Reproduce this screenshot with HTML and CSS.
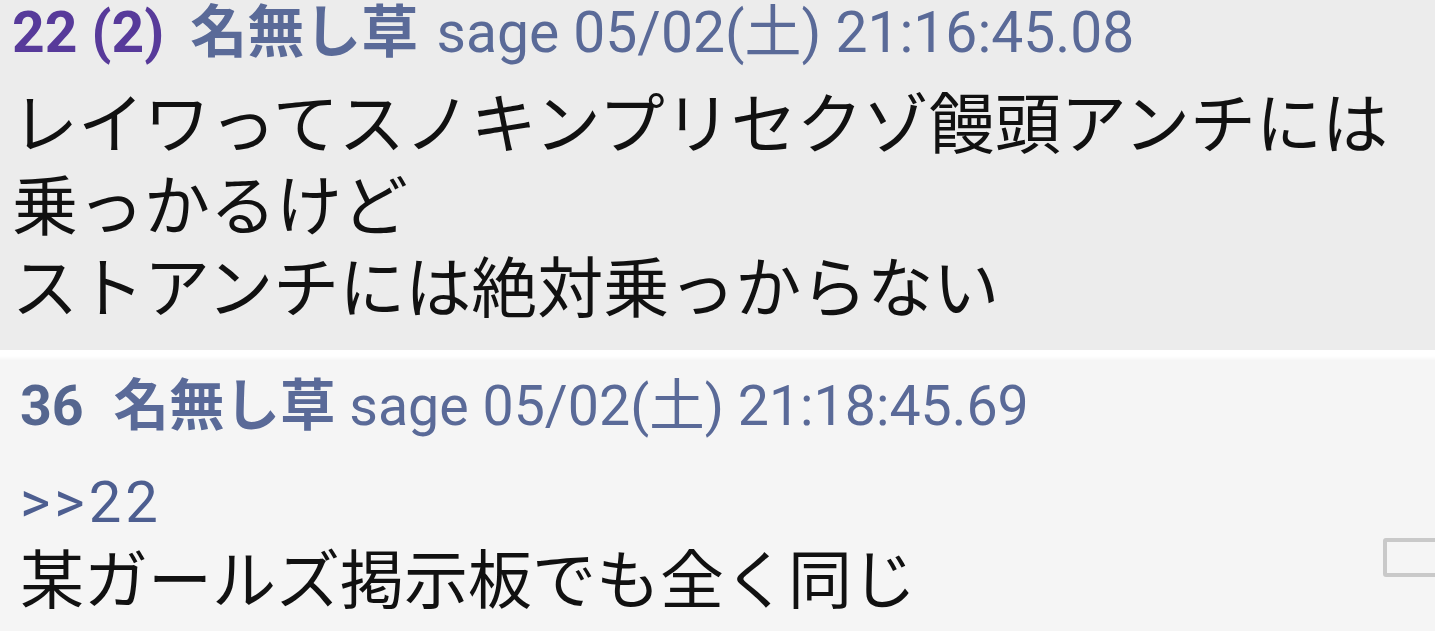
FILE: index.html
```html
<!DOCTYPE html>
<html>
  <head>
    <meta name="viewport" content="width=device-width, initial-scale=1" />
    <link rel="stylesheet" href="styles.css">
  </head>
  <body>
    <div class="thread">
      <div class="res res-read">
        <div class="res-head">
          <span class="num num-ref">22 (2)</span>
          <span class="name">名無し草</span>
          <span class="mail">sage</span>
          <span class="date">05/02(土) 21:16:45.08</span>
        </div>
        <div class="res-body">
          レイワってスノキンプリセクゾ饅頭アンチには<br />
          乗っかるけど<br />
          ストアンチには絶対乗っからない
        </div>
      </div>

      <div class="divider"></div>

      <div class="res res-new">
        <div class="res-head">
          <span class="num">36</span>
          <span class="name">名無し草</span>
          <span class="mail">sage</span>
          <span class="date">05/02(土) 21:18:45.69</span>
        </div>
        <a class="anchor">&gt;&gt;22</a>
        <div class="res-body">某ガールズ掲示板でも全く同じ</div>
        <span class="check"></span>
      </div>
    </div>
  </body>
</html>
```

FILE: styles.css
```css
* {
  box-sizing: border-box;
}
body {
  margin: 0;
  background: #f5f5f5;
  font-family: Roboto, "Noto Sans CJK JP", sans-serif;
  overflow: hidden;
}

/* One post */
.res {
  position: relative;
}
.res-read {
  background: #ececec;
  padding: 0 12px 26px 12px;
}
.res-new {
  background: #f5f5f5;
  padding: 9px 20px 0 20px;
  height: 273px;
}

/* white gap between posts */
.divider {
  height: 10px;
  background: linear-gradient(#ffffff 60%, #f7f7f7);
}

/* Header line: number, name, mail, date */
.res-head {
  font-size: 57px;
  line-height: 54px;
  color: #5a6a98;
  white-space: nowrap;
}
.res-new .res-head {
  font-size: 55.5px;
  line-height: 64px;
}
.num {
  font-weight: bold;
  margin-right: 12px;
  color: #55668f;
}
.res-new .num {
  margin-right: 16px;
}
.num-ref {
  color: #573a9a;
}
.name {
  font-family: "Noto Sans CJK JP", sans-serif;
  font-weight: bold;
  margin-right: 4px;
}
.res-new .name {
  margin-right: 0;
}

/* Body text */
.res-body {
  font-family: "Noto Sans CJK JP", sans-serif;
  font-size: 66px;
  line-height: 82px;
  color: #111111;
  margin-top: 18px;
}
.res-new .res-body {
  font-size: 64px;
  margin-top: 0;
}

/* >>22 link */
.anchor {
  display: block;
  margin-top: 31px;
  font-size: 58px;
  line-height: 64px;
  letter-spacing: 4px;
  color: #4d5e90;
}

/* Checkbox at the right edge */
.check {
  position: absolute;
  right: -30px;
  top: 178px;
  width: 82px;
  height: 39px;
  border: 4px solid #c9c9c9;
  border-radius: 3px;
}
```
